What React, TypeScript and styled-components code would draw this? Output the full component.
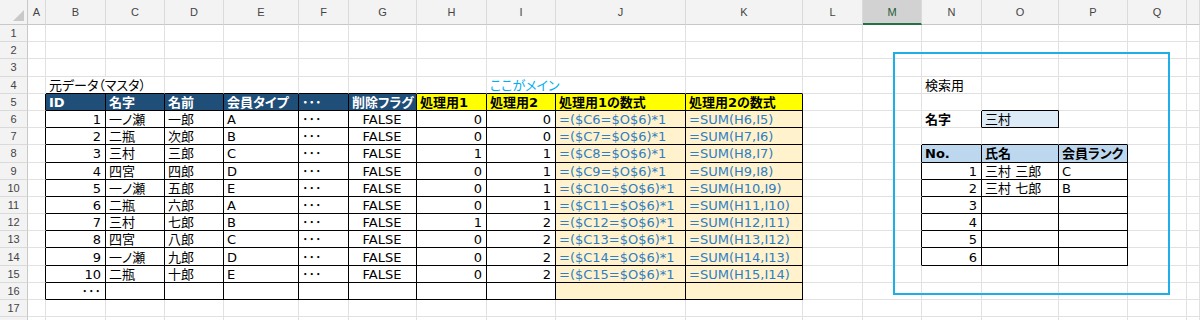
import React from "react";
import styled, { createGlobalStyle } from "styled-components";

const GlobalStyle = createGlobalStyle`
  html, body {
    margin: 0;
    padding: 0;
    background: #fff;
  }
  body {
    font-family: "DejaVu Sans", "Noto Sans CJK JP", sans-serif;
  }
`;

type Align = "left" | "right" | "center";

type CellData = {
  v?: string;
  bold?: boolean;
  fill?: string;
  color?: string;
  align?: Align;
  span?: number;
  table?: boolean;
};

const COLS: { id: string; w: number }[] = [
  { id: "A", w: 18 },
  { id: "B", w: 60 },
  { id: "C", w: 59 },
  { id: "D", w: 59 },
  { id: "E", w: 75 },
  { id: "F", w: 50 },
  { id: "G", w: 68 },
  { id: "H", w: 70 },
  { id: "I", w: 69 },
  { id: "J", w: 130 },
  { id: "K", w: 117 },
  { id: "L", w: 60 },
  { id: "M", w: 59 },
  { id: "N", w: 60 },
  { id: "O", w: 77 },
  { id: "P", w: 69 },
  { id: "Q", w: 59 },
  { id: "", w: 0 },
];
const ROW_COUNT = 18;
// the last row is only a sliver at the bottom edge, so its number is not shown
const LAST_NUMBERED = 17;

const NAVY = "#1f4e78";
const YELLOW = "#ffff00";
const BEIGE = "#fff2cc";
const FORMULA = "#2f7dc4";
const SKY = "#1eaee8";

const cells: Record<string, CellData> = {};
const put = (ref: string, d: CellData) => {
  cells[ref] = { ...cells[ref], ...d };
};

// 元データ（マスタ）
put("B4", { v: "元データ（マスタ）", span: 2 });
put("I4", { v: "ここがメイン", color: "#00aeef", span: 2 });

const head = ["ID", "名字", "名前", "会員タイプ", "･･･", "削除フラグ"];
"BCDEFG".split("").forEach((c, i) => put(c + "5", { v: head[i], bold: true, fill: NAVY, color: "#fff" }));
const head2 = ["処理用1", "処理用2", "処理用1の数式", "処理用2の数式"];
"HIJK".split("").forEach((c, i) => put(c + "5", { v: head2[i], bold: true, fill: YELLOW }));

const master = [
  ["一ノ瀬", "一郎", "A", 0, 0],
  ["二瓶", "次郎", "B", 0, 0],
  ["三村", "三郎", "C", 1, 1],
  ["四宮", "四郎", "D", 0, 1],
  ["一ノ瀬", "五郎", "E", 0, 1],
  ["二瓶", "六郎", "A", 0, 1],
  ["三村", "七郎", "B", 1, 2],
  ["四宮", "八郎", "C", 0, 2],
  ["一ノ瀬", "九郎", "D", 0, 2],
  ["二瓶", "十郎", "E", 0, 2],
];
master.forEach((m, i) => {
  const r = i + 6;
  put("B" + r, { v: String(i + 1), align: "right" });
  put("C" + r, { v: String(m[0]) });
  put("D" + r, { v: String(m[1]) });
  put("E" + r, { v: String(m[2]) });
  put("F" + r, { v: "･･･" });
  put("G" + r, { v: "FALSE", align: "center" });
  put("H" + r, { v: String(m[3]), align: "right" });
  put("I" + r, { v: String(m[4]), align: "right" });
  put("J" + r, { v: `=($C${r}=$O$6)*1`, fill: BEIGE, color: FORMULA });
  put("K" + r, { v: `=SUM(H${r},I${r - 1})`, fill: BEIGE, color: FORMULA });
});
put("B16", { v: "･･･", align: "right" });
put("J16", { fill: BEIGE });
put("K16", { fill: BEIGE });
for (let r = 5; r <= 16; r++) "BCDEFGHIJK".split("").forEach((c) => put(c + r, { table: true }));

// 検索用
put("N4", { v: "検索用" });
put("N6", { v: "名字", bold: true });
put("O6", { v: "三村", fill: "#ddebf7", table: true });
const LIGHT = "#bdd7ee";
put("N8", { v: "No.", bold: true, fill: LIGHT });
put("O8", { v: "氏名", bold: true, fill: LIGHT });
put("P8", { v: "会員ランク", bold: true, fill: LIGHT });
for (let i = 1; i <= 6; i++) put("N" + (i + 8), { v: String(i), align: "right" });
put("O9", { v: "三村 三郎" });
put("P9", { v: "C" });
put("O10", { v: "三村 七郎" });
put("P10", { v: "B" });
for (let r = 8; r <= 14; r++) "NOP".split("").forEach((c) => put(c + r, { table: true }));

const inTable = (ci: number, r: number) => {
  const col = COLS[ci];
  if (!col) return false;
  return !!cells[col.id + r]?.table;
};

const Sheet = styled.div<{ $cols: string }>`
  position: relative;
  display: grid;
  grid-template-columns: ${(p) => p.$cols};
  grid-template-rows: 25px repeat(${ROW_COUNT}, 17.2px);
  width: 1200px;
  height: 320px;
  overflow: hidden;
  background: #fff;
`;

const Corner = styled.div`
  background: #f3f3f3;
  border-right: 1px solid #c8c8c8;
  border-bottom: 1px solid #c8c8c8;
  box-sizing: border-box;
  display: flex;
  align-items: flex-end;
  justify-content: flex-end;
  padding: 0 3px 3px 0;
`;

const ColHead = styled.div<{ $selected?: boolean }>`
  background: ${(p) => (p.$selected ? "#d2d2d2" : "#f3f3f3")};
  border-right: 1px solid #dadada;
  border-bottom: ${(p) => (p.$selected ? "2px solid #217346" : "1px solid #c8c8c8")};
  box-sizing: border-box;
  display: flex;
  align-items: center;
  justify-content: center;
  font-family: "Liberation Sans", sans-serif;
  font-size: 11px;
  color: ${(p) => (p.$selected ? "#1e5c37" : "#444")};
`;

const RowHead = styled.div`
  background: #f3f3f3;
  border-right: 1px solid #c8c8c8;
  border-bottom: 1px solid #dadada;
  box-sizing: border-box;
  display: flex;
  align-items: center;
  justify-content: center;
  font-family: "Liberation Sans", sans-serif;
  font-size: 11px;
  color: #444;
`;

const Cell = styled.div<{
  $fill?: string;
  $color?: string;
  $bold?: boolean;
  $align: Align;
  $span: number;
  $right: string;
  $bottom: string;
}>`
  grid-column: span ${(p) => p.$span};
  box-sizing: border-box;
  display: flex;
  align-items: center;
  justify-content: ${(p) => (p.$align === "right" ? "flex-end" : p.$align === "center" ? "center" : "flex-start")};
  padding: 1px 4px 0 3px;
  background: ${(p) => p.$fill || "transparent"};
  border-right: 1px solid ${(p) => p.$right};
  border-bottom: 1px solid ${(p) => p.$bottom};
  color: ${(p) => p.$color || "#000"};
  font-size: 13px;
  font-weight: ${(p) => (p.$bold ? 700 : 400)};
  font-feature-settings: "palt";
  line-height: 1;
  white-space: nowrap;
  overflow: hidden;
`;

const Frame = styled.div`
  position: absolute;
  left: 893px;
  top: 52px;
  width: 277px;
  height: 243px;
  box-sizing: border-box;
  border: 2px solid ${SKY};
  pointer-events: none;
`;

const GRID = "#e1e1e1";

export default function App() {
  const cols = `28px ${COLS.slice(0, -1)
    .map((c) => c.w + "px")
    .join(" ")} 1fr`;

  const body: React.ReactNode[] = [];
  for (let r = 1; r <= ROW_COUNT; r++) {
    body.push(<RowHead key={"h" + r}>{r <= LAST_NUMBERED ? r : ""}</RowHead>);
    let ci = 0;
    while (ci < COLS.length) {
      const ref = COLS[ci].id + r;
      const d = cells[ref] || {};
      const span = d.span || 1;
      const last = ci + span - 1;
      const right = inTable(last, r) || inTable(last + 1, r) ? "#000" : GRID;
      let below = false;
      for (let k = ci; k <= last; k++) if (inTable(k, r) || inTable(k, r + 1)) below = true;
      body.push(
        <Cell
          key={ref}
          $span={span}
          $fill={d.fill}
          $color={d.color}
          $bold={d.bold}
          $align={d.align || "left"}
          $right={right}
          $bottom={below ? "#000" : GRID}
        >
          {d.v}
        </Cell>
      );
      ci += span;
    }
  }

  return (
    <>
      <GlobalStyle />
      <Sheet $cols={cols}>
        <Corner>
          <svg width="11" height="11" viewBox="0 0 11 11">
            <polygon points="11,0 11,11 0,11" fill="#c9c9c9" />
          </svg>
        </Corner>
        {COLS.map((c, i) => (
          <ColHead key={"c" + i} $selected={c.id === "M"}>
            {c.id}
          </ColHead>
        ))}
        {body}
        <Frame />
      </Sheet>
    </>
  );
}
